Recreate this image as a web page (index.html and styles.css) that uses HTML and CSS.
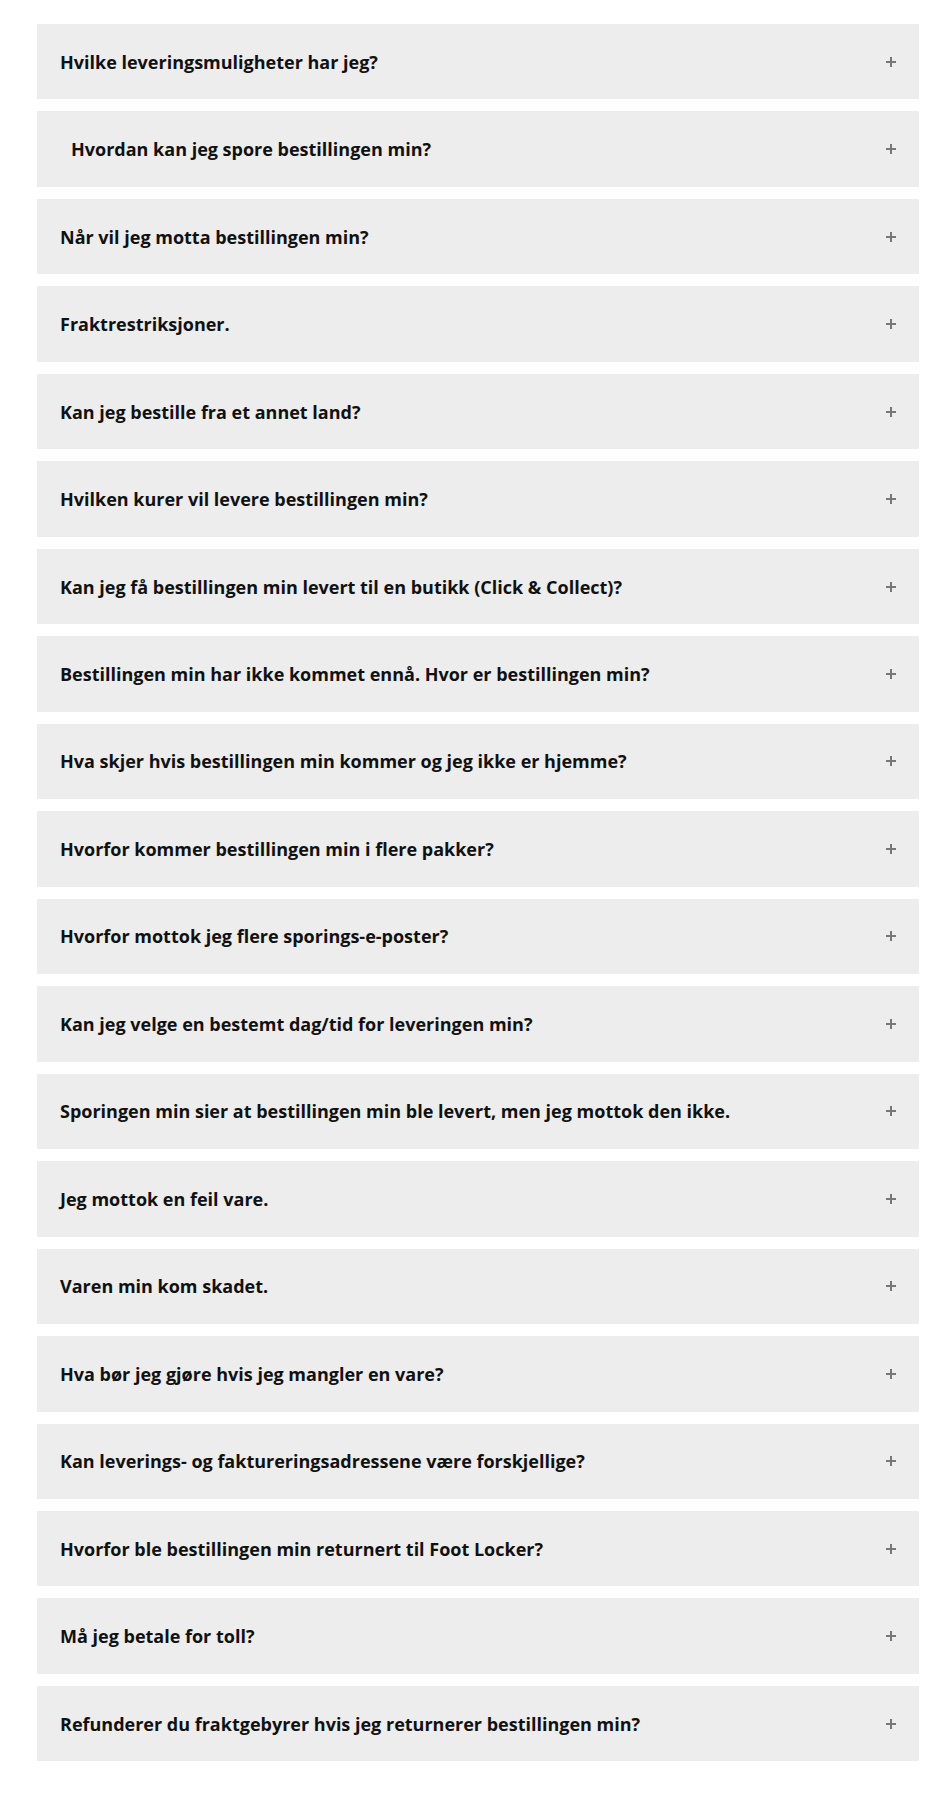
FILE: index.html
```html
<!DOCTYPE html>
<html lang="no">
<head>
<meta charset="utf-8">
<title>FAQ</title>
<link rel="stylesheet" href="styles.css">
</head>
<body>
<div class="faq">
  <div class="item"><span class="q">Hvilke leveringsmuligheter har jeg?</span><span class="plus"></span></div>
  <div class="item"><span class="q indent">Hvordan kan jeg spore bestillingen min?</span><span class="plus"></span></div>
  <div class="item"><span class="q">Når vil jeg motta bestillingen min?</span><span class="plus"></span></div>
  <div class="item"><span class="q">Fraktrestriksjoner.</span><span class="plus"></span></div>
  <div class="item"><span class="q">Kan jeg bestille fra et annet land?</span><span class="plus"></span></div>
  <div class="item"><span class="q">Hvilken kurer vil levere bestillingen min?</span><span class="plus"></span></div>
  <div class="item"><span class="q">Kan jeg få bestillingen min levert til en butikk (Click &amp; Collect)?</span><span class="plus"></span></div>
  <div class="item"><span class="q">Bestillingen min har ikke kommet ennå. Hvor er bestillingen min?</span><span class="plus"></span></div>
  <div class="item"><span class="q">Hva skjer hvis bestillingen min kommer og jeg ikke er hjemme?</span><span class="plus"></span></div>
  <div class="item"><span class="q">Hvorfor kommer bestillingen min i flere pakker?</span><span class="plus"></span></div>
  <div class="item"><span class="q">Hvorfor mottok jeg flere sporings-e-poster?</span><span class="plus"></span></div>
  <div class="item"><span class="q">Kan jeg velge en bestemt dag/tid for leveringen min?</span><span class="plus"></span></div>
  <div class="item"><span class="q">Sporingen min sier at bestillingen min ble levert, men jeg mottok den ikke.</span><span class="plus"></span></div>
  <div class="item"><span class="q">Jeg mottok en feil vare.</span><span class="plus"></span></div>
  <div class="item"><span class="q">Varen min kom skadet.</span><span class="plus"></span></div>
  <div class="item"><span class="q">Hva bør jeg gjøre hvis jeg mangler en vare?</span><span class="plus"></span></div>
  <div class="item"><span class="q">Kan leverings- og faktureringsadressene være forskjellige?</span><span class="plus"></span></div>
  <div class="item"><span class="q">Hvorfor ble bestillingen min returnert til Foot Locker?</span><span class="plus"></span></div>
  <div class="item"><span class="q">Må jeg betale for toll?</span><span class="plus"></span></div>
  <div class="item"><span class="q">Refunderer du fraktgebyrer hvis jeg returnerer bestillingen min?</span><span class="plus"></span></div>
</div>
</body>
</html>
```
FILE: styles.css
```css
html, body {
  margin: 0;
  padding: 0;
  background: #fff;
}
body {
  font-family: "Open Sans", "Liberation Sans", sans-serif;
}
.faq {
  width: 882px;
  margin: 0 0 0 37px;
  padding: 24px 0 41px;
  display: flex;
  flex-direction: column;
  gap: 12px;
}
.item {
  height: 75.47px;
  box-sizing: border-box;
  background: #ededed;
  display: flex;
  align-items: center;
  justify-content: space-between;
  padding: 0 23px;
}
.q {
  font-size: 18px;
  line-height: 24px;
  font-weight: 700;
  color: #111;
}
.q.indent {
  padding-left: 11px;
}
.plus {
  position: relative;
  width: 10px;
  height: 10px;
  flex: none;
}
.plus::before,
.plus::after {
  content: "";
  position: absolute;
  background: #777;
}
.plus::before {
  left: 0;
  top: 4px;
  width: 10px;
  height: 2px;
}
.plus::after {
  left: 4px;
  top: 0;
  width: 2px;
  height: 10px;
}
```
